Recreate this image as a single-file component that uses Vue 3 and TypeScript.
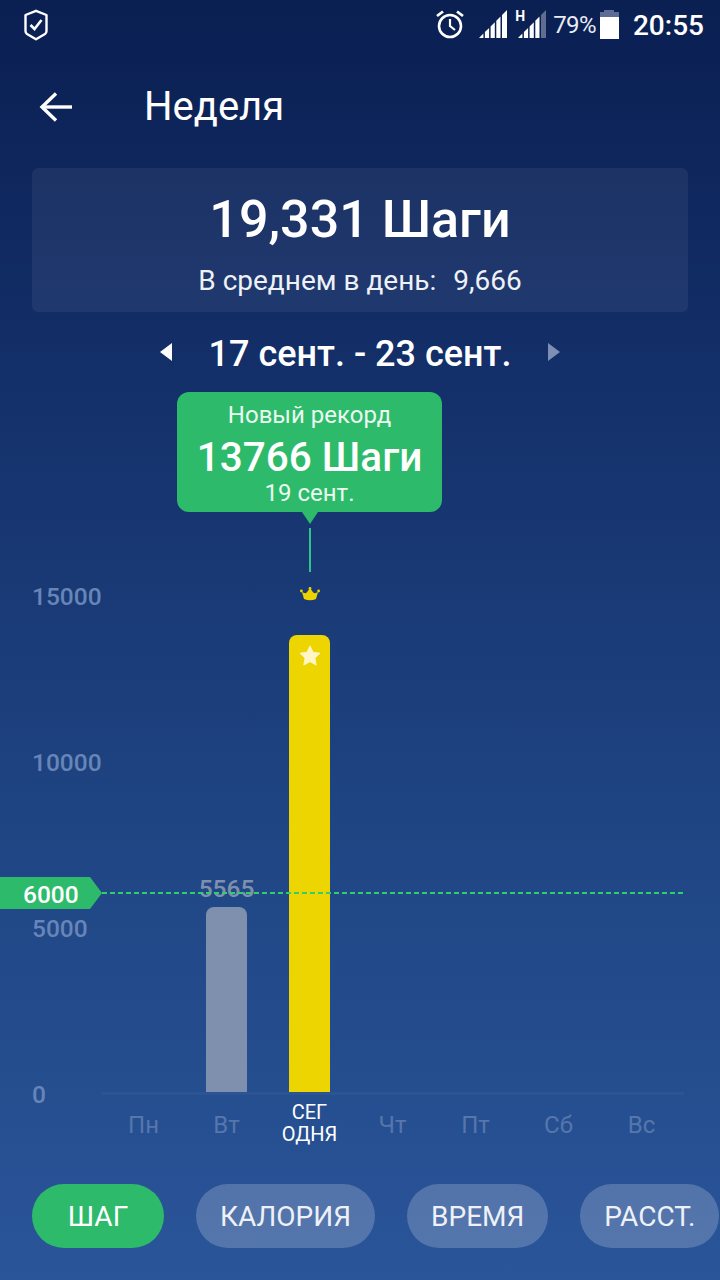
<script setup lang="ts">
const yLabels = ['15000', '10000', '5000', '0']

interface Day {
  key: string
  label: string[]
  value: number
  today?: boolean
}

const days: Day[] = [
  { key: 'mon', label: ['Пн'], value: 0 },
  { key: 'tue', label: ['Вт'], value: 5565 },
  { key: 'wed', label: ['СЕГ', 'ОДНЯ'], value: 13766, today: true },
  { key: 'thu', label: ['Чт'], value: 0 },
  { key: 'fri', label: ['Пт'], value: 0 },
  { key: 'sat', label: ['Сб'], value: 0 },
  { key: 'sun', label: ['Вс'], value: 0 },
]

const tabs = ['ШАГ', 'КАЛОРИЯ', 'ВРЕМЯ', 'РАССТ.']

// 166px per 5000 steps on the axis
const barHeight = (v: number) => `${(v / 5000) * 166}px`
</script>

<template>
  <div class="screen">
    <div class="status">
      <svg class="shield" width="26" height="32" viewBox="0 0 26 32" fill="none" stroke="#fff" stroke-width="2.4">
        <path d="M13 1.8 L23.5 6 V22 Q23.5 24 22 25 L13 30.2 L4 25 Q2.5 24 2.5 22 V6 Z" stroke-linejoin="round" />
        <path d="M7.5 16 L11.5 20 L18.5 11" stroke-width="2.6" />
      </svg>
      <div class="status-right">
        <svg class="alarm" width="30" height="30" viewBox="0 0 30 30" fill="none" stroke="#fff" stroke-width="2.6">
          <circle cx="15" cy="16" r="11" />
          <path d="M15 9 V16 L20 20" stroke-width="2.2" />
          <path d="M2 6 L8 1.5 M28 6 L22 1.5" stroke-width="2.8" />
        </svg>
        <svg class="signal" width="28" height="28" viewBox="0 0 28 28" fill="#fff">
          <path d="M0 28 H4.4 V23.6 Z M5.9 28 H10.1 V17.9 L5.9 22.1 Z M11.6 28 H15.8 V12.2 L11.6 16.4 Z M17.3 28 H21.5 V6.5 L17.3 10.7 Z M23 28 H28 V0 L23 5 Z" />
        </svg>
        <div class="signal-h">
          <span class="h-mark">H</span>
          <svg width="28" height="28" viewBox="0 0 28 28" fill="#fff">
            <path d="M0 28 H4.4 V23.6 Z M5.9 28 H10.1 V17.9 L5.9 22.1 Z M11.6 28 H15.8 V12.2 L11.6 16.4 Z M17.3 28 H21.5 V6.5 L17.3 10.7 Z" />
            <path d="M23 28 H28 V0 L23 5 Z" fill-opacity="0.35" />
          </svg>
        </div>
        <span class="battery-pct">79%</span>
        <div class="battery"><i class="battery-cap"></i><i class="battery-empty"></i><i class="battery-full"></i></div>
        <span class="clock">20:55</span>
      </div>
    </div>

    <div class="header">
      <svg class="back" width="33" height="32" viewBox="0 0 33 32" fill="none" stroke="#fff" stroke-width="3.4">
        <path d="M33 16 H4" />
        <path d="M17 2.5 L3 16 L17 29.5" />
      </svg>
      <span class="title">Неделя</span>
    </div>

    <div class="summary">
      <div class="summary-main">19,331 Шаги</div>
      <div class="summary-sub"><span>В среднем в день:</span><span>9,666</span></div>
    </div>

    <div class="range">
      <i class="arrow arrow-left"></i>
      <span class="range-text">17 сент. - 23 сент.</span>
      <i class="arrow arrow-right"></i>
    </div>

    <div class="chart">
      <div class="record">
        <div class="record-title">Новый рекорд</div>
        <div class="record-value">13766 Шаги</div>
        <div class="record-date">19 сент.</div>
      </div>
      <i class="record-tip"></i>
      <i class="record-line"></i>

      <div class="axis">
        <span v-for="y in yLabels" :key="y">{{ y }}</span>
      </div>

      <div class="plot">
        <div v-for="d in days" :key="d.key" class="col">
          <span v-if="d.value && !d.today" class="bar-value">{{ d.value }}</span>
          <svg v-if="d.today" class="crown" width="20" height="14" viewBox="0 0 20 14" fill="#edd400">
            <path d="M2 5 Q6 7.5 7.5 4.5 L10 1 L12.5 4.5 Q14 7.5 18 5 L16 12 Q10 14.6 4 12 Z" />
            <circle cx="10" cy="1.4" r="1.4" />
            <circle cx="1.4" cy="4" r="1.4" />
            <circle cx="18.6" cy="4" r="1.4" />
          </svg>
          <div
            v-if="d.value"
            :class="['bar', { 'bar-today': d.today }]"
            :style="{ height: barHeight(d.value) }"
          >
            <svg v-if="d.today" class="star" width="22" height="21" viewBox="0 0 24 23" fill="#fff6c8">
              <path d="M12 1 L15.4 8 L23 9 L17.4 14.3 L18.8 22 L12 18.2 L5.2 22 L6.6 14.3 L1 9 L8.6 8 Z" stroke="#fff6c8" stroke-width="1" stroke-linejoin="round" />
            </svg>
          </div>
        </div>
      </div>

      <div class="days">
        <div v-for="d in days" :key="d.key" :class="['day', { 'day-today': d.today }]">
          <span v-for="line in d.label" :key="line">{{ line }}</span>
        </div>
      </div>

      <div class="goal">
        <span class="goal-tag">6000</span>
        <i class="goal-line"></i>
      </div>
    </div>

    <div class="tabs">
      <div v-for="(t, i) in tabs" :key="t" :class="['tab', { 'tab-active': i === 0 }]">{{ t }}</div>
    </div>
  </div>
</template>

<style>
html,
body {
  margin: 0;
  background: #0b1f53;
}
</style>

<style scoped>
.screen {
  width: 720px;
  height: 1280px;
  overflow: hidden;
  display: flex;
  flex-direction: column;
  color: #fff;
  font-family: Roboto, "Noto Sans", sans-serif;
  background: linear-gradient(180deg, #0a1f52 0%, #14306a 30%, #1f4583 65%, #2a5599 100%);
}

.status {
  height: 50px;
  padding: 0 16px 0 23px;
  display: flex;
  align-items: center;
  justify-content: space-between;
}

.shield {
  margin-bottom: 1px;
}

.status-right {
  display: flex;
  align-items: center;
}

.signal {
  margin-left: 14px;
  margin-bottom: 2px;
}

.signal-h {
  position: relative;
  margin-left: 11px;
  margin-bottom: 2px;
  display: flex;
}

.h-mark {
  position: absolute;
  left: -3px;
  top: -2px;
  font-size: 14px;
  font-weight: 700;
}

.battery-pct {
  font-size: 24px;
  margin-left: 7px;
  letter-spacing: -0.6px;
  color: #e8ecf4;
}

.battery {
  width: 19px;
  height: 29px;
  margin-left: 4px;
  margin-bottom: 2px;
  display: flex;
  flex-direction: column;
  align-items: center;
}

.battery-cap {
  width: 10px;
  height: 2px;
  background: #5d6c93;
}

.battery-empty {
  width: 19px;
  height: 5px;
  background: #5d6c93;
}

.battery-full {
  width: 19px;
  flex: 1;
  background: #fff;
}

.clock {
  margin-left: 14px;
  font-size: 28px;
  font-weight: 500;
}

.header {
  height: 118px;
  padding-left: 39px;
  box-sizing: border-box;
  padding-bottom: 5px;
  display: flex;
  align-items: center;
}

.title {
  margin-left: 72px;
  font-size: 40px;
}

.summary {
  height: 144px;
  margin: 0 32px;
  border-radius: 6px;
  background: rgba(255, 255, 255, 0.06);
  display: flex;
  flex-direction: column;
  align-items: center;
  box-sizing: border-box;
  padding-top: 20px;
}

.summary-main {
  font-size: 52px;
  line-height: 64px;
  font-weight: 500;
}

.summary-sub {
  margin-top: 12px;
  display: flex;
  gap: 17px;
  font-size: 28px;
  line-height: 34px;
  color: #eef1f7;
}

.range {
  height: 80px;
  box-sizing: border-box;
  padding-top: 4px;
  display: flex;
  align-items: center;
  justify-content: center;
}

.range-text {
  margin: 0 37px;
  font-size: 36px;
  font-weight: 500;
}

.arrow {
  width: 0;
  height: 0;
  margin-top: -4px;
  border-top: 9px solid transparent;
  border-bottom: 9px solid transparent;
}

.arrow-left {
  border-right: 12px solid #fff;
}

.arrow-right {
  border-left: 12px solid #7d8fb5;
}

.chart {
  position: relative;
  height: 792px;
}

.record {
  position: absolute;
  left: 177px;
  top: 0;
  width: 265px;
  height: 120px;
  border-radius: 12px;
  background: #2dbb6b;
  text-align: center;
}

.record-title {
  margin-top: 8px;
  font-size: 24px;
  line-height: 30px;
  color: #eafaf0;
}

.record-value {
  margin-top: 3px;
  font-size: 40.5px;
  line-height: 48px;
  font-weight: 500;
}

.record-date {
  margin-top: -2px;
  font-size: 24px;
  line-height: 28px;
  color: #eafaf0;
}

.record-tip {
  position: absolute;
  left: 302px;
  top: 120px;
  width: 0;
  height: 0;
  border-left: 8px solid transparent;
  border-right: 8px solid transparent;
  border-top: 12px solid #2dbb6b;
}

.record-line {
  position: absolute;
  left: 309px;
  top: 136px;
  width: 1.5px;
  height: 44px;
  background: #2ec48a;
}

.axis {
  position: absolute;
  left: 32px;
  top: 190px;
  height: 528px;
  display: flex;
  flex-direction: column;
  justify-content: space-between;
  font-size: 24.5px;
  line-height: 30px;
  font-weight: 500;
  color: #6885b8;
}

.plot {
  position: absolute;
  left: 102px;
  right: 36px;
  top: 170px;
  height: 530px;
  display: grid;
  grid-template-columns: repeat(7, 83px);
  border-bottom: 3px solid rgba(255, 255, 255, 0.035);
}

.col {
  display: flex;
  flex-direction: column;
  align-items: center;
  justify-content: flex-end;
  min-height: 0;
}

.bar {
  width: 41px;
  border-radius: 8px 8px 0 0;
  background: #7f8fae;
  display: flex;
  justify-content: center;
}

.bar-today {
  background: #ecd500;
}

.bar-value {
  margin-bottom: 3px;
  font-size: 24.5px;
  line-height: 30px;
  font-weight: 500;
  color: #7f8fae;
}

.crown {
  margin-bottom: 34px;
}

.star {
  margin-top: 10px;
}

.days {
  position: absolute;
  left: 102px;
  top: 710px;
  display: grid;
  grid-template-columns: repeat(7, 83px);
}

.day {
  height: 46px;
  display: flex;
  flex-direction: column;
  align-items: center;
  justify-content: center;
  font-size: 24px;
  color: #5676ac;
}

.day-today {
  font-size: 20px;
  line-height: 22px;
  color: #fff;
  margin-top: -2px;
}

.goal {
  position: absolute;
  left: 0;
  right: 36px;
  top: 485px;
  height: 32px;
  display: flex;
  align-items: center;
}

.goal-tag {
  width: 102px;
  height: 32px;
  box-sizing: border-box;
  padding-left: 23px;
  background: #2dbb6b;
  clip-path: polygon(0 0, 90px 0, 100% 50%, 90px 100%, 0 100%);
  font-size: 24.5px;
  line-height: 36px;
  font-weight: 500;
}

.goal-line {
  flex: 1;
  height: 2px;
  background: repeating-linear-gradient(90deg, #2fd06c 0 5px, transparent 5px 8px);
}

.tabs {
  display: flex;
  gap: 32px;
  margin-left: 32px;
}

.tab {
  flex: none;
  height: 64px;
  min-width: 132px;
  box-sizing: border-box;
  padding: 0 24px;
  border-radius: 32px;
  background: rgba(255, 255, 255, 0.2);
  display: flex;
  align-items: center;
  justify-content: center;
  font-size: 28px;
  color: #eef1f7;
}

.tab-active {
  background: #2dbb6b;
  color: #fff;
}
</style>
